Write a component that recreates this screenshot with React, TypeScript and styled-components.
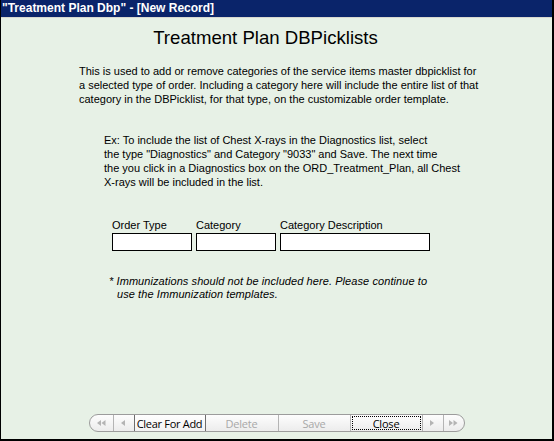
import React from "react";
import styled, { createGlobalStyle } from "styled-components";

const Global = createGlobalStyle`
  html, body { margin: 0; padding: 0; background: #e7f1e6; }
  body { width: 554px; height: 441px; overflow: hidden; }
  #root { width: 554px; height: 441px; }
`;

const Window = styled.div`
  box-sizing: border-box;
  width: 554px;
  height: 441px;
  display: flex;
  flex-direction: column;
  border-left: 1px solid #000;
  border-right: 2px solid #000;
  border-bottom: 2px solid #000;
  background: #e7f1e6;
  font-family: "Liberation Sans", Arial, sans-serif;
  color: #000;
`;

const TitleBar = styled.div`
  height: 17px;
  background: #0a246a;
  color: #fff;
  font-family: "Liberation Sans", Arial, sans-serif;
  font-weight: bold;
  font-size: 12px;
  line-height: 17px;
  padding-left: 1px;
  border-bottom: 1px solid #d8d8d0;
  white-space: nowrap;
`;

const Body = styled.div`
  flex: 1;
  display: flex;
  flex-direction: column;
`;

const Heading = styled.h1`
  margin: 9px 0 0 0;
  padding-right: 22px;
  font-size: 18.6px;
  font-weight: normal;
  line-height: 22px;
  text-align: center;
`;

const Para = styled.p<{ $indent: number; $top: number }>`
  margin: ${(p) => p.$top}px 0 0 ${(p) => p.$indent}px;
  font-size: 11px;
  line-height: 14px;
  white-space: nowrap;
`;

const FieldRow = styled.div`
  display: flex;
  gap: 4px;
  margin: 29px 0 0 111px;
`;

const Field = styled.label`
  display: flex;
  flex-direction: column;
  gap: 1px;
  font-size: 11px;
  line-height: 14px;
`;

const Input = styled.input<{ $w: number }>`
  box-sizing: border-box;
  width: ${(p) => p.$w}px;
  height: 18px;
  margin: 0;
  border: 1px solid #000;
  background: #fff;
  padding: 0 2px;
  font-size: 11px;
  outline: none;
`;

const Note = styled.p`
  margin: 24px 0 0 108px;
  font-size: 11px;
  font-style: italic;
  line-height: 13px;
  letter-spacing: 0.08px;
  white-space: nowrap;
`;

const NoteIndent = styled.span`
  padding-left: 8px;
`;

const NavWrap = styled.div`
  margin-top: auto;
  margin-bottom: 7px;
  display: flex;
  justify-content: center;
`;

const NavBar = styled.div`
  display: flex;
  height: 18px;
  box-sizing: border-box;
  border: 1px solid #9c9c9c;
  border-radius: 9px;
  background: linear-gradient(#fdfdfd, #ececec);
  overflow: hidden;
`;

const NavBtn = styled.div<{ $w: number; $disabled?: boolean; $first?: boolean }>`
  box-sizing: border-box;
  width: ${(p) => p.$w}px;
  flex: none;
  display: flex;
  align-items: center;
  justify-content: center;
  white-space: nowrap;
  font-family: "Open Sans", "Liberation Sans", sans-serif;
  font-size: 11px;
  letter-spacing: -0.2px;
  color: ${(p) => (p.$disabled ? "#a8a8a8" : "#000")};
  border-left: ${(p) => (p.$first ? "none" : "1px solid #b4b4b4")};
`;

const ActiveBtn = styled(NavBtn)`
  border: 1px solid #6e6e6e;
  background: linear-gradient(#ffffff, #f2f2f2);
  margin: -1px 0;
  height: 18px;
  letter-spacing: -0.3px;
`;

const FocusBtn = styled(NavBtn)`
  padding: 1px;
`;

const FocusRing = styled.div`
  box-sizing: border-box;
  width: 100%;
  height: 100%;
  border: 1px dotted #000;
  display: flex;
  align-items: center;
  justify-content: center;
`;

const Arrow: React.FC<{ dir: "l" | "r"; double?: boolean }> = ({ dir, double }) => {
  const tri = (x: number) =>
    dir === "l"
      ? `M${x + 4} 0 L${x} 3 L${x + 4} 6 Z`
      : `M${x} 0 L${x + 4} 3 L${x} 6 Z`;
  return (
    <svg width={double ? 9 : 5} height={6} viewBox={`0 0 ${double ? 9 : 5} 6`}>
      <path d={tri(0)} fill="#b4b4b4" />
      {double && <path d={tri(4.5)} fill="#b4b4b4" />}
    </svg>
  );
};

export default function App() {
  return (
    <>
      <Global />
      <Window>
        <TitleBar>"Treatment Plan Dbp" - [New Record]</TitleBar>
        <Body>
          <Heading>Treatment Plan DBPicklists</Heading>
          <Para $indent={78} $top={15}>
            This is used to add or remove categories of the service items master dbpicklist for
            <br />a selected type of order. Including a category here will include the entire list of that
            <br />category in the DBPicklist, for that type, on the customizable order template.
          </Para>
          <Para $indent={103} $top={27}>
            Ex: To include the list of Chest X-rays in the Diagnostics list, select
            <br />the type "Diagnostics" and Category "9033" and Save. The next time
            <br />the you click in a Diagnostics box on the ORD_Treatment_Plan, all Chest
            <br />X-rays will be included in the list.
          </Para>
          <FieldRow>
            <Field>
              Order Type
              <Input $w={80} />
            </Field>
            <Field>
              Category
              <Input $w={80} />
            </Field>
            <Field>
              Category Description
              <Input $w={150} />
            </Field>
          </FieldRow>
          <Note>
            * Immunizations should not be included here. Please continue to
            <br />
            <NoteIndent>use the Immunization templates.</NoteIndent>
          </Note>
          <NavWrap>
            <NavBar>
              <NavBtn $w={23} $first $disabled>
                <Arrow dir="l" double />
              </NavBtn>
              <NavBtn $w={21} $disabled>
                <Arrow dir="l" />
              </NavBtn>
              <ActiveBtn $w={72}>Clear For Add</ActiveBtn>
              <NavBtn $w={72} $first $disabled>
                Delete
              </NavBtn>
              <NavBtn $w={72} $disabled>
                Save
              </NavBtn>
              <FocusBtn $w={72}>
                <FocusRing>Close</FocusRing>
              </FocusBtn>
              <NavBtn $w={21} $disabled>
                <Arrow dir="r" />
              </NavBtn>
              <NavBtn $w={21} $disabled>
                <Arrow dir="r" double />
              </NavBtn>
            </NavBar>
          </NavWrap>
        </Body>
      </Window>
    </>
  );
}
